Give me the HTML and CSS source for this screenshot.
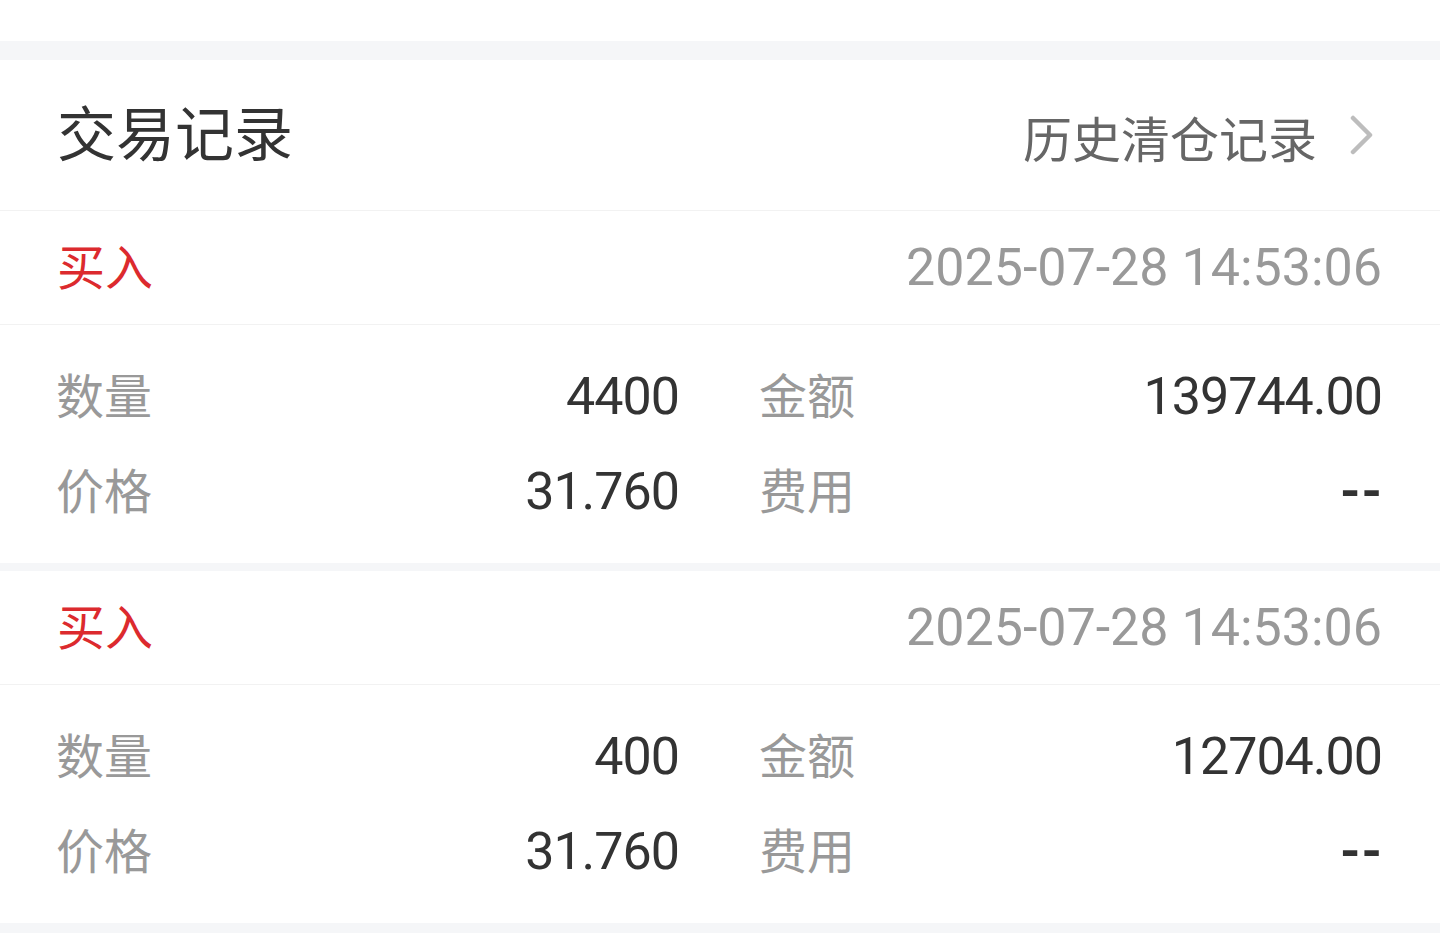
FILE: index.html
```html
<!DOCTYPE html>
<html>

<head>
  <meta charset="utf-8">
  <meta name="viewport" content="width=device-width">
  <title>交易记录</title>

  <link rel="stylesheet" href="styles.css">
</head>

<body>
  <div class="prev-card"></div>
  <div class="band"></div>

  <section class="panel">
    <header class="panel-head">
      <h2 class="panel-title">交易记录</h2>
      <a class="more" href="#">
        <span class="more-text">历史清仓记录</span>
        <svg class="chevron" width="32" height="40" viewBox="0 0 32 40">
          <polyline points="3,3 20,20 3,37" fill="none" stroke="#bdbdbd" stroke-width="4.5" stroke-linecap="round" stroke-linejoin="round"/>
        </svg>
      </a>
    </header>

    <article class="trade">
      <div class="trade-head">
        <span class="side buy">买入</span>
        <span class="time">2025-07-28 14:53:06</span>
      </div>
      <div class="trade-body">
        <div class="cell"><span class="label">数量</span><span class="value">4400</span></div>
        <div class="cell"><span class="label">金额</span><span class="value">139744.00</span></div>
        <div class="cell"><span class="label">价格</span><span class="value">31.760</span></div>
        <div class="cell"><span class="label">费用</span><span class="value empty">--</span></div>
      </div>
    </article>

    <div class="band small"></div>

    <article class="trade">
      <div class="trade-head">
        <span class="side buy">买入</span>
        <span class="time">2025-07-28 14:53:06</span>
      </div>
      <div class="trade-body">
        <div class="cell"><span class="label">数量</span><span class="value">400</span></div>
        <div class="cell"><span class="label">金额</span><span class="value">12704.00</span></div>
        <div class="cell"><span class="label">价格</span><span class="value">31.760</span></div>
        <div class="cell"><span class="label">费用</span><span class="value empty">--</span></div>
      </div>
    </article>

    <div class="band bottom"></div>
  </section>
</body>

</html>
```

FILE: styles.css
```css
* {
  box-sizing: border-box;
}

body {
  margin: 0;
  padding: 0;
  background-color: white;
  font-family: "Noto Sans CJK SC", "Noto Sans", sans-serif;
  color: #333;
}

.prev-card {
  height: 41px;
  background-color: white;
}

.band {
  height: 19px;
  background-color: #f5f6f8;
}

.band.small {
  height: 8px;
}

.band.bottom {
  height: 10px;
}

.panel {
  background-color: white;
}

.panel-head {
  height: 151px;
  padding: 0 58px 0 57px;
  display: flex;
  align-items: center;
  justify-content: space-between;
  border-bottom: 1px solid #f2f2f2;
}

.panel-title {
  margin: 0;
  padding-bottom: 10px;
  font-size: 59px;
  font-weight: 400;
  color: #333;
  line-height: 1;
}

.more {
  display: flex;
  align-items: center;
  gap: 33px;
  color: #666;
  text-decoration: none;
  line-height: 1;
}

.more-text {
  font-size: 49px;
  padding-top: 2px;
}

.chevron {
  display: block;
}

.trade-head {
  height: 114px;
  padding: 0 58px 0 57px;
  display: flex;
  align-items: center;
  justify-content: space-between;
  border-bottom: 1px solid #f2f2f2;
}

.side {
  font-size: 48px;
  line-height: 1;
  padding-bottom: 8px;
}

.buy {
  color: #dc2a2e;
}

.time {
  font-family: Roboto, "Noto Sans", sans-serif;
  font-size: 52px;
  color: #999;
  line-height: 1;
}

.trade-body {
  padding: 24px 58px 24px 56px;
  display: grid;
  grid-template-columns: 1fr 1fr;
  column-gap: 80px;
}

.cell {
  height: 95px;
  display: flex;
  align-items: center;
  justify-content: space-between;
}

.label {
  font-size: 48px;
  color: #999;
  line-height: 1;
  padding-bottom: 8px;
}

.value {
  font-family: Roboto, "Noto Sans", sans-serif;
  font-size: 52px;
  color: #333;
  line-height: 1;
  letter-spacing: -1px;
}

.value.empty {
  font-weight: 700;
  letter-spacing: 1px;
  margin-right: -1px;
}
```
